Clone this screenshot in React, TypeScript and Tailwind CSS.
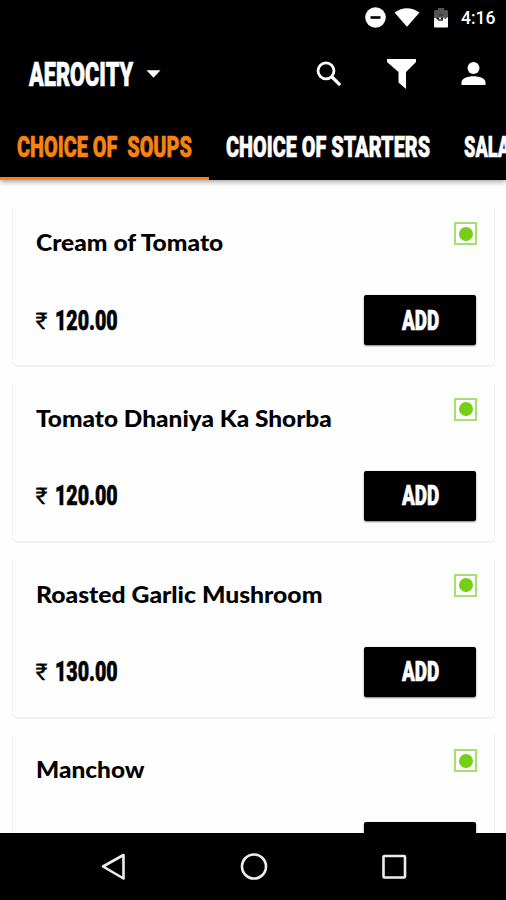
import { useLayoutEffect, useRef, useState } from 'react';

const dishes = [
  { name: 'Cream of Tomato', price: '120.00', nameWidth: 'w-[187px]' },
  { name: 'Tomato Dhaniya Ka Shorba', price: '120.00', nameWidth: 'w-[296px]' },
  { name: 'Roasted Garlic Mushroom', price: '130.00', nameWidth: 'w-[286px]' },
  { name: 'Manchow', price: '120.00', nameWidth: 'w-[109px]' },
];

const tabs = [
  { label: 'CHOICE OF  SOUPS', width: 'w-[175px]', active: true },
  { label: 'CHOICE OF STARTERS', width: 'w-[204px]', active: false },
  { label: 'SALADS', width: 'w-[69px]', active: false },
];

// Squeezes a line of text horizontally to the width of its box
function Fit({ text, className }: { text: string; className: string }) {
  const box = useRef<HTMLSpanElement>(null);
  const inner = useRef<HTMLSpanElement>(null);
  const [scale, setScale] = useState(1);

  useLayoutEffect(() => {
    if (box.current && inner.current) {
      setScale(box.current.clientWidth / inner.current.offsetWidth);
    }
  }, [text]);

  return (
    <span ref={box} className={`block shrink-0 whitespace-pre leading-none ${className}`}>
      <span ref={inner} className="inline-block origin-left align-top" style={{ transform: `scaleX(${scale})` }}>
        {text}
      </span>
    </span>
  );
}

function StatusBar() {
  return (
    <div className="flex h-9 shrink-0 items-center justify-end pr-[11px] text-white">
      <svg className="h-[22px] w-[22px]" viewBox="0 0 22 22">
        <circle cx="11.5" cy="10.500" r="10.300" fill="white" />
        <path d="M6.500 10.500h10" stroke="black" strokeWidth="2.600" />
      </svg>
      <svg className="ml-2 h-[20px] w-[26px]" viewBox="0 0 26 20">
        <path d="M.5 4.500Q13-4 25.500 4.500L13 18.800Z" fill="white" />
      </svg>
      <svg className="ml-[13px] h-[22px] w-4" viewBox="0 0 16 22">
        <path d="M1 4.500Q1 3 2.500 3H5V1h6v2h2.500Q15 3 15 4.500V11H1Z" fill="#555" />
        <path d="M1 11h2l2 2 2-3 2 3 2-3 1 2 3-2v9.500q0 1-1 1H2q-1 0-1-1Z" fill="white" />
        <path d="M6 8h4M5 13h5" stroke="#333" strokeWidth="1.500" />
      </svg>
      <Fit text="4:16" className="ml-3 w-[34px] font-['Roboto'] text-[18.500px] font-medium" />
    </div>
  );
}

function Toolbar() {
  return (
    <div className="flex h-[76px] shrink-0 items-center pl-[29px] text-white">
      <Fit text="AEROCITY" className="mt-px w-[104px] font-['Roboto'] text-[33px] font-black [-webkit-text-stroke:0.700px]" />
      <svg className="ml-[13px] h-2 w-[15px]" viewBox="0 0 15 8">
        <path d="M.5.200h14L7.500 7.700Z" fill="white" />
      </svg>
      <svg className="ml-[155px] h-[26px] w-[26px]" viewBox="0 0 26 26" fill="none" stroke="white">
        <circle cx="10" cy="9.800" r="8" strokeWidth="2.800" />
        <path d="m15.500 15.500 8.700 8.700" strokeWidth="3.200" />
      </svg>
      <svg className="ml-[45px] h-[30px] w-[29px]" viewBox="0 0 29 30">
        <path d="M0 0h29v3L19 13V30l-7.500-6.500V13L0 3Z" fill="white" />
      </svg>
      <svg className="ml-[45px] h-6 w-[25px]" viewBox="0 0 25 24">
        <circle cx="12.500" cy="6" r="6" fill="white" />
        <path d="M.5 23v-2.700c0-4 6.500-6 12-6s12 2 12 6V23Z" fill="white" />
      </svg>
    </div>
  );
}

function Tabs() {
  return (
    <div className="flex h-[68px] shrink-0 overflow-hidden">
      {tabs.map((tab) => (
        <div
          key={tab.label}
          className={`flex h-full shrink-0 items-center border-b-[3px] px-[17px] pt-1.5 ${
            tab.active ? 'border-[#f98310] text-[#f98310]' : 'border-black text-white'
          }`}
        >
          <Fit text={tab.label} className={`font-['Roboto'] text-[29.500px] font-black [-webkit-text-stroke:0.600px] ${tab.width}`} />
        </div>
      ))}
    </div>
  );
}

function DishCard({ dish }: { dish: (typeof dishes)[number] }) {
  return (
    <div className="flex h-[160px] shrink-0 flex-col justify-between rounded-[4px] bg-[#fefefe] pt-[17px] pr-[18px] pb-5 pl-[22.500px] shadow-[0_1px_1px_1px_rgba(0,0,0,0.055)]">
      <div className="flex items-start justify-between">
        <Fit text={dish.name} className={`mt-[9px] font-['Lato'] text-[23.500px] font-black ${dish.nameWidth}`} />
        <div className="-mr-px flex h-[23px] w-[23px] items-center justify-center border-2 border-[#a5e070]">
          <div className="h-[14px] w-[14px] rounded-full bg-[#76cf17]" />
        </div>
      </div>
      <div className="flex items-center justify-between">
        <div className="flex items-center">
          <Fit text="₹" className="mt-0.5 w-[12px] font-['Roboto'] text-[23px] [-webkit-text-stroke:0.300px]" />
          <Fit text={dish.price} className="mt-px ml-[7px] w-[63px] font-['Roboto'] text-[28px] font-black [-webkit-text-stroke:0.600px]" />
        </div>
        <button className="flex h-[50px] w-[112px] items-center justify-center rounded-[2px] bg-black pt-px text-white shadow-[0_1px_2px_rgba(0,0,0,0.5)]">
          <Fit text="ADD" className="w-[37px] font-['Roboto'] text-[28px] font-black [-webkit-text-stroke:0.700px]" />
        </button>
      </div>
    </div>
  );
}

function NavBar() {
  return (
    <div className="z-10 flex h-[67px] shrink-0 items-center bg-black pl-[100px]">
      <svg className="h-7 w-[26px]" viewBox="0 0 26 28" fill="none" stroke="#eee" strokeWidth="2.600" strokeLinejoin="round">
        <path d="M23.500 2v23.500L3 13.500Z" />
      </svg>
      <svg className="ml-[113.500px] h-7 w-7" viewBox="0 0 28 28" fill="none" stroke="#eee" strokeWidth="2.600">
        <circle cx="14" cy="13.500" r="12" />
      </svg>
      <svg className="ml-[113.500px] h-[26px] w-[26px]" viewBox="0 0 26 26" fill="none" stroke="#eee" strokeWidth="2.600">
        <rect x="2.500" y="2" width="21.500" height="21.500" rx="1" />
      </svg>
    </div>
  );
}

export default function App() {
  return (
    <div className="flex h-[900px] w-[506px] flex-col overflow-hidden bg-[#fefefe]">
      <header className="z-10 flex shrink-0 flex-col bg-black shadow-[0_2px_5px_rgba(0,0,0,0.35)]">
        <StatusBar />
        <Toolbar />
        <Tabs />
      </header>
      <main className="flex min-h-0 flex-1 flex-col gap-[15.800px] overflow-hidden pt-[25px] pr-3 pl-[13px]">
        {dishes.map((dish) => (
          <DishCard key={dish.name} dish={dish} />
        ))}
      </main>
      <NavBar />
    </div>
  );
}
